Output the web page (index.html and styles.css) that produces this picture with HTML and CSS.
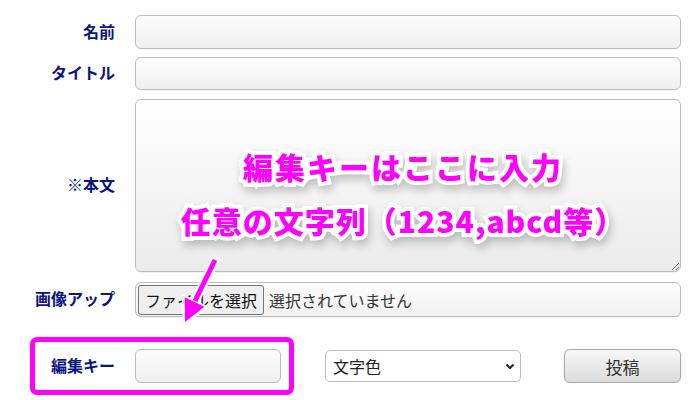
FILE: index.html
```html
<!DOCTYPE html>
<html lang="ja">
<head>
    <meta charset="UTF-8">
    <meta name="viewport" content="width=device-width, initial-scale=1.0">
    <title>投稿フォーム</title>
    <link rel="stylesheet" href="styles.css">
</head>
<body>
    <form class="post-form">
        <div class="row row-name">
            <label class="label">名前</label>
            <input class="field" type="text">
        </div>
        <div class="row row-title">
            <label class="label">タイトル</label>
            <input class="field" type="text">
        </div>
        <div class="row row-body">
            <label class="label">※本文</label>
            <textarea class="field body-area"></textarea>
        </div>
        <div class="row row-file">
            <label class="label">画像アップ</label>
            <div class="field file-box">
                <span class="file-btn">ファイルを選択</span>
                <span class="file-name">選択されていません</span>
            </div>
        </div>
        <div class="row row-bottom">
            <label class="label">編集キー</label>
            <div class="bottom-controls">
                <input class="field key-field" type="password">
                <div class="select-wrap">
                    <select class="color-select">
                        <option>文字色</option>
                    </select>
                    <svg class="chevron" width="10" height="7" viewBox="0 0 10 7">
                        <path d="M1.5 1.5 L5 5 L8.5 1.5" fill="none" stroke="#222" stroke-width="2"/>
                    </svg>
                </div>
                <button class="submit-btn" type="button">投稿</button>
            </div>
        </div>
    </form>

    <!-- annotations drawn over the form -->
    <div class="note">
        <p class="note-first">編集キーはここに入力</p>
        <p>任意の文字列（1234,abcd等）</p>
    </div>
    <svg class="arrow" width="60" height="90" viewBox="0 0 60 90">
        <line x1="45" y1="15" x2="25" y2="56" stroke="#fff" stroke-width="9" stroke-linecap="round"/>
        <polygon points="15,77 35.5,62.5 13.7,51.7" fill="#fff" stroke="#fff" stroke-width="4" stroke-linejoin="round"/>
        <line x1="45" y1="15" x2="25" y2="56" stroke="#ff00ff" stroke-width="5"/>
        <polygon points="15,77 34.5,61.8 14.7,52.2" fill="#ff00ff"/>
    </svg>
    <div class="key-frame"></div>
</body>
</html>
```

FILE: styles.css
```css
/* Basic page */
body {
    margin: 0;
    font-family: "Noto Sans CJK JP", "Liberation Sans", sans-serif;
    background-color: #fff;
    color: #333;
}

.post-form {
    width: 681px;
    padding-top: 15px;
}

.row {
    display: grid;
    grid-template-columns: 115px 546px;
    column-gap: 20px;
    align-items: center;
}

.row-name { height: 34px; margin-bottom: 8px; }
.row-title { height: 33px; margin-bottom: 9px; }
.row-body { height: 173px; margin-bottom: 10px; }
.row-file { height: 35px; margin-bottom: 32px; }
.row-bottom { height: 34px; }

.label {
    text-align: right;
    font-size: 16px;
    font-weight: bold;
    color: #0a1580;
    line-height: 1;
    padding-bottom: 3px;
}

/* Text inputs */
.field {
    box-sizing: border-box;
    width: 100%;
    height: 100%;
    margin: 0;
    border: 1px solid #bcbcbc;
    border-radius: 6px;
    background: linear-gradient(#fdfdfd, #efefef);
    box-shadow: 0 1px 1px rgba(0, 0, 0, 0.06);
    font-family: inherit;
    font-size: 16px;
}

.body-area {
    resize: vertical;
    background: linear-gradient(#ffffff, #ebebeb);
}

/* Fake file picker */
.file-box {
    display: flex;
    align-items: center;
    gap: 5px;
    padding-left: 2px;
    background: linear-gradient(#fcfcfc, #f1f1f1);
}

.file-btn {
    box-sizing: border-box;
    height: 30px;
    padding: 0 6px;
    border: 1px solid #767676;
    border-radius: 3px;
    background-color: #efefef;
    color: #111;
    line-height: 28px;
    font-size: 16px;
}

.file-name {
    color: #333;
    font-size: 16px;
}

/* Bottom row */
.bottom-controls {
    display: flex;
    align-items: center;
    height: 100%;
}

.key-field {
    width: 146px;
    height: 34px;
    margin-right: 44px;
}

.select-wrap {
    position: relative;
    width: 196px;
    height: 32px;
    margin-right: 43px;
}

.color-select {
    appearance: none;
    box-sizing: border-box;
    width: 100%;
    height: 100%;
    padding-left: 7px;
    border: 1px solid #bcbcbc;
    border-radius: 5px;
    background-color: #fff;
    color: #222;
    font-family: inherit;
    font-size: 16px;
}

.chevron {
    position: absolute;
    right: 6px;
    top: 13px;
}

.submit-btn {
    width: 117px;
    height: 34px;
    border: 1px solid #a9a9a9;
    border-radius: 6px;
    background: linear-gradient(#f7f7f7, #dcdcdc);
    box-shadow: 0 1px 2px rgba(0, 0, 0, 0.15);
    color: #333;
    font-family: inherit;
    font-size: 17px;
}

/* Annotations */
.note {
    position: absolute;
    left: 135px;
    top: 139px;
    width: 536px;
    text-align: center;
    font-size: 30px;
    font-weight: 900;
    color: #ff00ff;
    -webkit-text-stroke: 8px #fff;
    paint-order: stroke fill;
    filter: drop-shadow(2px 5px 4px rgba(0, 0, 0, 0.22));
}

.note p {
    margin: 0;
    line-height: 54px;
    letter-spacing: 1px;
}

.note .note-first {
    letter-spacing: 2px;
}

.arrow {
    position: absolute;
    left: 170px;
    top: 245px;
}

.key-frame {
    position: absolute;
    left: 30px;
    top: 337px;
    width: 254px;
    height: 48px;
    border: 5px solid #ff00ff;
    border-radius: 7px;
}
```
